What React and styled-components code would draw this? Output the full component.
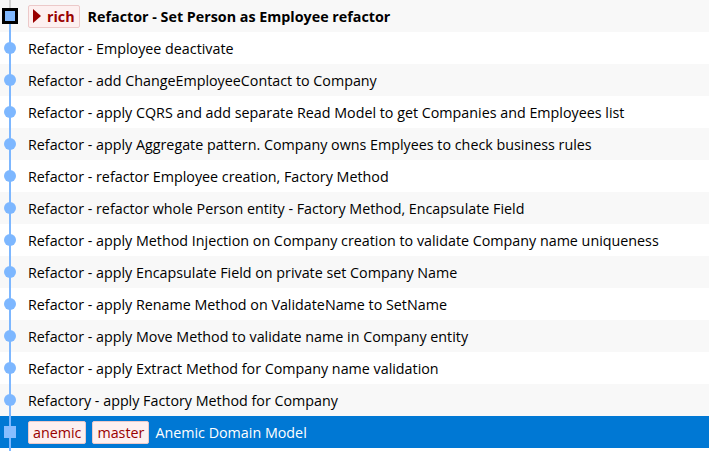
import React from "react";
import styled, { createGlobalStyle } from "styled-components";

const Global = createGlobalStyle`
  html, body { margin: 0; padding: 0; background: #ffffff; }
  body { font-family: "Open Sans", "Noto Sans", sans-serif; }
`;

const List = styled.div`
  width: 709px;
  height: 451px;
  overflow: hidden;
  display: flex;
  flex-direction: column;
  position: relative;
  background: #ffffff;
`;

const Row = styled.div`
  height: 32px;
  flex: 0 0 32px;
  display: flex;
  align-items: center;
  background: ${(p) => (p.$selected ? "#0078d4" : p.$alt ? "#f8f8f8" : "#ffffff")};
  color: ${(p) => (p.$selected ? "#ffffff" : "#000000")};
  font-size: 14.3px;
  white-space: nowrap;
`;

const Graph = styled.div`
  width: 28px;
  flex: 0 0 28px;
  height: 100%;
  position: relative;
`;

const Line = styled.div`
  position: absolute;
  left: 9px;
  width: 2px;
  top: ${(p) => p.$top}px;
  bottom: ${(p) => p.$bottom}px;
  background: ${(p) => p.$color};
`;

const Dot = styled.div`
  position: absolute;
  left: 4px;
  top: 10px;
  width: 12px;
  height: 12px;
  border-radius: 50%;
  background: #7db7ff;
`;

const HeadSquare = styled.div`
  position: absolute;
  left: 2px;
  top: 8px;
  width: 10px;
  height: 10px;
  border: 3px solid #000;
  background: #80b8ff;
`;

const SelSquare = styled.div`
  position: absolute;
  left: 4px;
  top: 10px;
  width: 12px;
  height: 12px;
  background: #88bdff;
`;

const Tag = styled.span`
  display: inline-flex;
  align-items: center;
  height: 21px;
  padding: 0 ${(p) => (p.$bold ? 4 : 4)}px;
  margin-right: ${(p) => (p.$bold ? 8 : 6)}px;
  background: #fdf0f0;
  border: 1px solid #ecc9c9;
  border-radius: 2px;
  color: #990000;
  font-weight: ${(p) => (p.$bold ? 700 : 400)};
  font-size: 14.3px;
  gap: 6px;
`;

const Message = styled.span`
  font-weight: ${(p) => (p.$bold ? 700 : 400)};
`;

const Bottom = styled.div`
  flex: 1;
  position: relative;
`;

const commits = [
  "Refactor - Employee deactivate",
  "Refactor - add ChangeEmployeeContact to Company",
  "Refactor - apply CQRS and add separate Read Model to get Companies and Employees list",
  "Refactor - apply Aggregate pattern. Company owns Emplyees to check business rules",
  "Refactor - refactor Employee creation, Factory Method",
  "Refactor - refactor whole Person entity - Factory Method, Encapsulate Field",
  "Refactor - apply Method Injection on Company creation to validate Company name uniqueness",
  "Refactor - apply Encapsulate Field on private set Company Name",
  "Refactor - apply Rename Method on ValidateName to SetName",
  "Refactor - apply Move Method to validate name in Company entity",
  "Refactor - apply Extract Method for Company name validation",
  "Refactory - apply Factory Method for Company",
];

export default function App() {
  return (
    <>
      <Global />
      <List>
        <Row $alt>
          <Graph>
            <Line $top={0} $bottom={24} $color="#d4d4d4" />
            <Line $top={24} $bottom={0} $color="#7db7ff" />
            <HeadSquare />
          </Graph>
          <Tag $bold>
            <svg width="8" height="14" viewBox="0 0 8 14">
              <polygon points="0,0 8,7 0,14" fill="#990000" />
            </svg>
            rich
          </Tag>
          <Message $bold>Refactor - Set Person as Employee refactor</Message>
        </Row>
        {commits.map((c, i) => (
          <Row key={i} $alt={i % 2 === 1}>
            <Graph>
              <Line $top={0} $bottom={0} $color="#7db7ff" />
              <Dot />
            </Graph>
            <Message>{c}</Message>
          </Row>
        ))}
        <Row $selected>
          <Graph>
            <Line $top={0} $bottom={0} $color="#7db7ff" />
            <SelSquare />
          </Graph>
          <Tag>anemic</Tag>
          <Tag>master</Tag>
          <Message>Anemic Domain Model</Message>
        </Row>
        <Bottom>
          <Line $top={0} $bottom={0} $color="#7db7ff" />
        </Bottom>
      </List>
    </>
  );
}
